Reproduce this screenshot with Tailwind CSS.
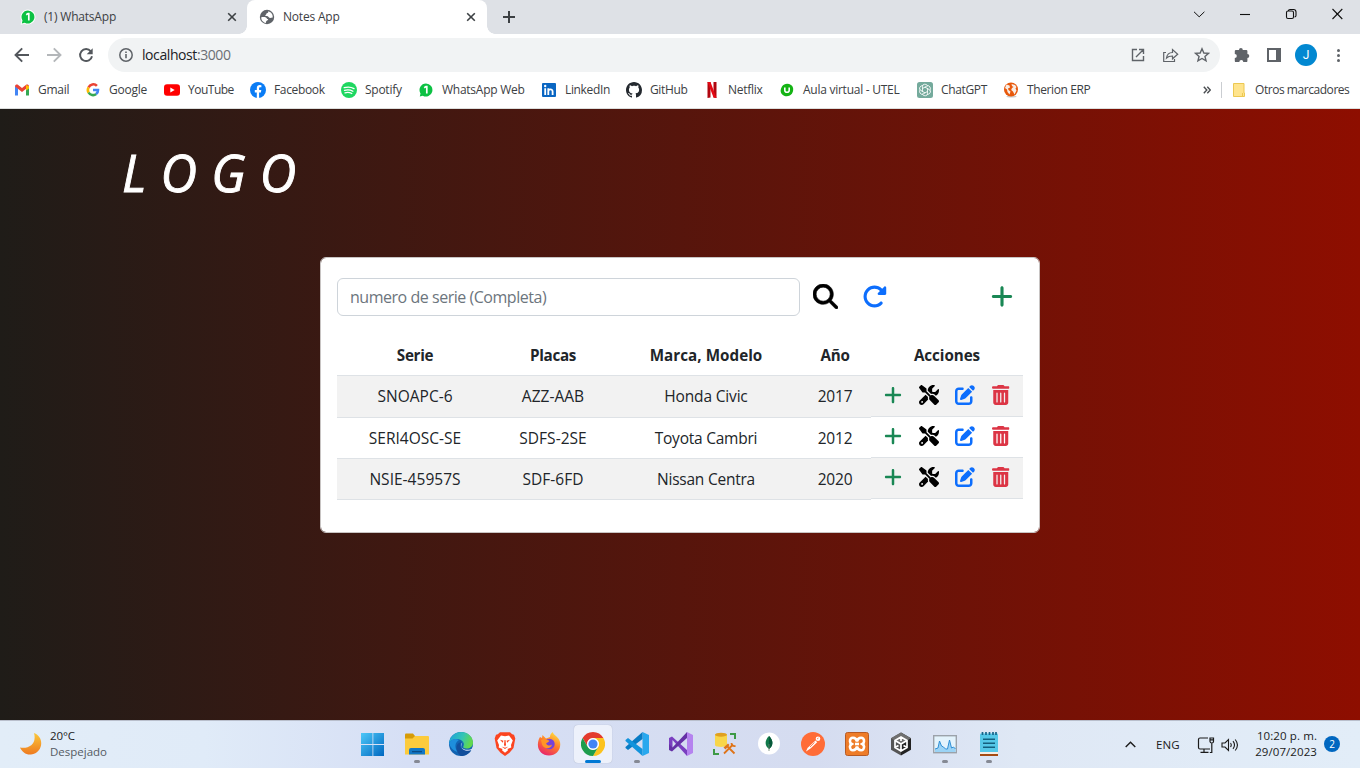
<!DOCTYPE html>
<html lang="es">
<head>
<meta charset="utf-8">
<title>Notes App</title>
<script src="https://cdn.jsdelivr.net/npm/@tailwindcss/browser@4"></script>
</head>
<body class="w-[1360px] h-[768px] overflow-hidden flex flex-col font-['Open_Sans',sans-serif] text-[#3c4043]">

<svg class="hidden">
  <symbol id="plus" viewBox="0 0 448 512"><path d="M256 80c0-17.7-14.3-32-32-32s-32 14.3-32 32V224H48c-17.7 0-32 14.3-32 32s14.3 32 32 32H192V432c0 17.7 14.3 32 32 32s32-14.3 32-32V288H400c17.7 0 32-14.3 32-32s-14.3-32-32-32H256V80z"/></symbol>
  <symbol id="tools" viewBox="0 0 512 512"><path d="M78.6 5C69.1-2.4 55.6-1.5 47 7L7 47c-8.5 8.5-9.4 22-2.1 31.6l80 104c4.5 5.9 11.6 9.4 19 9.4h54.1l109 109c-14.7 29-10 65.4 14.3 89.6l112 112c12.5 12.5 32.8 12.5 45.3 0l64-64c12.5-12.5 12.5-32.8 0-45.3l-112-112c-24.2-24.2-60.6-29-89.6-14.3l-109-109V104c0-7.5-3.5-14.5-9.4-19L78.6 5zM19.9 396.1C7.2 408.8 0 426.1 0 444.1C0 481.6 30.4 512 67.9 512c18 0 35.3-7.2 48-19.9L233.7 374.3c-7.8-20.9-9-43.6-3.6-65.1l-61.7-61.7L19.9 396.1zM512 144c0-10.5-1.1-20.7-3.2-30.5c-2.4-11.2-16.1-14.1-24.2-6l-63.9 63.9c-3 3-7.1 4.7-11.3 4.7H352c-8.8 0-16-7.2-16-16V102.6c0-4.2 1.7-8.3 4.7-11.3l63.9-63.9c8.1-8.1 5.2-21.8-6-24.2C388.7 1.1 378.5 0 368 0C288.5 0 224 64.5 224 144l0 .8 85.3 85.3c36-9.1 75.8 .5 104 28.7L429 274.5c49-23 83-72.8 83-130.5zM56 432a24 24 0 1 1 48 0 24 24 0 1 1 -48 0z"/></symbol>
  <symbol id="edit" viewBox="0 0 512 512"><path d="M471.6 21.7c-21.9-21.9-57.3-21.9-79.2 0L362.3 51.7l97.9 97.9 30.1-30.1c21.9-21.9 21.9-57.3 0-79.2L471.6 21.7zm-299.2 220c-6.1 6.1-10.8 13.6-13.5 21.9l-29.6 88.8c-2.9 8.6-.6 18.1 5.8 24.6s15.9 8.7 24.6 5.8l88.8-29.6c8.2-2.7 15.7-7.4 21.9-13.5L437.7 172.3 339.7 74.3 172.4 241.7zM96 64C43 64 0 107 0 160V416c0 53 43 96 96 96H352c53 0 96-43 96-96V320c0-17.7-14.3-32-32-32s-32 14.3-32 32v96c0 17.7-14.3 32-32 32H96c-17.7 0-32-14.3-32-32V160c0-17.7 14.3-32 32-32h96c17.7 0 32-14.3 32-32s-14.3-32-32-32H96z"/></symbol>
  <symbol id="trash" viewBox="0 0 448 512"><path d="M135.2 17.7C140.6 6.8 151.7 0 163.8 0H284.2c12.1 0 23.2 6.8 28.6 17.7L320 32h96c17.7 0 32 14.3 32 32s-14.3 32-32 32H32C14.3 96 0 81.7 0 64S14.3 32 32 32h96l7.2-14.3zM32 128H416V448c0 35.3-28.7 64-64 64H96c-35.3 0-64-28.7-64-64V128zm96 64c-8.8 0-16 7.2-16 16V432c0 8.8 7.2 16 16 16s16-7.2 16-16V208c0-8.8-7.2-16-16-16zm96 0c-8.8 0-16 7.2-16 16V432c0 8.8 7.2 16 16 16s16-7.2 16-16V208c0-8.8-7.2-16-16-16zm96 0c-8.8 0-16 7.2-16 16V432c0 8.8 7.2 16 16 16s16-7.2 16-16V208c0-8.8-7.2-16-16-16z"/></symbol>
  <symbol id="close" viewBox="0 0 10 10"><path d="M1.2 1.2l7.6 7.6M8.8 1.2L1.2 8.8" stroke="currentColor" stroke-width="1.6" fill="none"/></symbol>
</svg>

<!-- Tab strip -->
<header class="h-[34px] shrink-0 bg-[#dee1e6] flex text-[12px] leading-[34px]">
  <div class="w-[247px] flex items-center bg-[#dee1e6] pl-5">
    <svg class="w-4 h-4 shrink-0" viewBox="0 0 16 16"><path d="M8 .5a7.5 7.5 0 1 1-3.4 14.2L.6 15.7l.9-4A7.5 7.5 0 0 1 8 .5z" fill="#fff"/><path d="M8 1.5a6.5 6.5 0 1 1-3.2 12.2l-3 .7.7-3A6.5 6.5 0 0 1 8 1.5z" fill="#0cc143"/><path d="M6.2 5.8L8 4.6h.8v6.800" stroke="#fff" stroke-width="1.7" fill="none"/></svg>
    <span class="ml-2 w-[183px] tracking-[-0.2px] whitespace-nowrap">(1) WhatsApp</span>
    <svg class="w-[10px] h-[10px]"><use href="#close"/></svg>
  </div>
  <div class="w-[240px] relative flex items-center bg-white rounded-t-lg pl-3">
    <span class="absolute -left-2 bottom-0 size-2 bg-[radial-gradient(circle_at_0_0,#dee1e6_7.5px,#fff_8px)]"></span>
    <span class="absolute -right-2 bottom-0 size-2 bg-[radial-gradient(circle_at_100%_0,#dee1e6_7.5px,#fff_8px)]"></span>
    <svg class="w-4 h-4 shrink-0" viewBox="0 0 16 16"><circle cx="8" cy="8" r="7.200" fill="#5f6368"/><path d="M2.300 8.200C3.500 8 6 8 7 8.400c1 .400.800 1.600 1.800 1.700.900.100 0 1.500-1 1.600-.800.200-.600 1.200-1 2.200C4 13.300 2 11 2.300 8.200z" fill="#fff"/><path d="M9.200 2.200c.400 1-.300 1.800-1.300 2.100-.900.300-.300 1.500-1.300 1.600-.700.100-.300 1.100.500 1.100 1.200 0 2.200.200 2.700 1.300.500 1 2 .600 3.900.300.400-2.900-1.300-5.600-4.500-6.400z" fill="#fff"/></svg>
    <span class="ml-2 w-[183px] tracking-[-0.2px] whitespace-nowrap">Notes App</span>
    <svg class="w-[10px] h-[10px]"><use href="#close"/></svg>
  </div>
  <div class="flex items-center ml-4"><svg class="w-3 h-3" viewBox="0 0 12 12"><path d="M6 0v12M0 6h12" stroke="#3c4043" stroke-width="2"/></svg></div>
  <div class="ml-auto flex pt-[7px] pr-[11px]">
    <svg class="w-[161px] h-[14px]" viewBox="0 0 161 14" fill="none" stroke="#111" stroke-width="1.1"><path d="M6 4.800l5.200 5L16.400 4.800" stroke-width="1"/><path d="M52 7.500h10"/><rect x="98.500" y="4" width="7" height="7.500" rx="1.500"/><path d="M100.500 4V3.500Q100.500 2.500 102 2.500h3.500q2.500 0 2.500 2.500v3.500q0 1.500-1.500 1.500M144.500 2l9.800 10M154.300 2l-9.800 10"/></svg>
  </div>
</header>

<!-- Address bar -->
<div class="h-[42px] shrink-0 bg-white flex items-center pl-[14px]">
  <svg class="w-[82px] h-4 shrink-0" viewBox="0 0 82 16" fill="none" stroke-width="1.9"><path d="M15 8H1.800M8.200 1.300L1.500 8l6.700 6.700" stroke="#53575c"/><path d="M33 8h13.200M39.800 1.300L46.500 8l-6.700 6.700" stroke="#b4b7ba"/><path d="M76.800 4.300A6 6 0 1 0 78 9.200" stroke="#53575c"/><path d="M78.700 1.200v6h-6z" fill="#53575c"/></svg>
  <div class="ml-3 w-[1112px] h-[34px] rounded-full bg-[#f1f3f4] flex items-center pl-[11px]">
    <svg class="w-[14px] h-[14px]" viewBox="0 0 14 14"><circle cx="7" cy="7" r="6.200" fill="none" stroke="#5f6368" stroke-width="1.500"/><path d="M7 6v4.300M7 3.500v1.500" stroke="#5f6368" stroke-width="1.600"/></svg>
    <span class="ml-[9px] pb-[2px] text-[14px] tracking-[-0.42px] text-[#202124]">localhost<span class="text-[#6b6f74]">:3000</span></span>
    <svg class="ml-auto mr-[10px] w-20 h-4" viewBox="0 0 80 16" fill="none" stroke="#5f6368" stroke-width="1.400"><path d="M7 2.500H2.500v11h11V9M9 2.500h4.500V7M13.500 2.500L6 10"/><path d="M36 5.500h-2.300v9h10.800v-2.500M36.500 11c.5-3.500 2.500-5.500 6-5.500V2.500l5.200 4.700-5.200 4.600V9c-2.500 0-4.500.4-6 2z" stroke-width="1.200"/><path d="M72 1.800l1.850 4.200 4.600.4-3.500 3 1.100 4.500L72 11.500 67.950 13.900l1.100-4.500-3.500-3 4.600-.4z"/></svg>
  </div>
  <div class="ml-[14px] flex items-center">
    <svg class="w-4 h-4" viewBox="0 0 16 16" fill="#5f6368"><path d="M5 2.900a1.900 1.900 0 0 1 3.800 0h3.400a1.200 1.200 0 0 1 1.200 1.200v3a1.900 1.900 0 0 1 0 3.800v3a1.200 1.200 0 0 1-1.200 1.200H9.300a2 2 0 0 0-4 0H2a1.200 1.200 0 0 1-1.200-1.200v-2.900a2 2 0 0 0 0-4V4.100A1.200 1.200 0 0 1 2 2.900z"/></svg>
    <svg class="ml-[17px] w-[14px] h-[14px]" viewBox="0 0 14 14"><rect x="1" y="1" width="12" height="12" fill="none" stroke="#5f6368" stroke-width="2"/><rect x="9" y="0" width="5" height="14" fill="#5f6368"/></svg>
    <span class="ml-[14px] size-[22px] rounded-full bg-[#0288d1] text-white font-['Roboto',sans-serif] text-[12px] leading-[22px] text-center">J</span>
    <span class="ml-5 flex flex-col gap-[2px]"><i class="size-[3px] rounded-full bg-[#5f6368]"></i><i class="size-[3px] rounded-full bg-[#5f6368]"></i><i class="size-[3px] rounded-full bg-[#5f6368]"></i></span>
  </div>
</div>

<!-- Bookmarks -->
<nav class="h-[33px] shrink-0 bg-white border-b border-[#dcdedd] flex items-center pl-[14px] pb-1 text-[12px] tracking-[-0.26px] whitespace-nowrap [&>a]:flex [&>a]:items-center [&>a]:gap-2 [&>a]:shrink-0">
  <a class="w-[71px]"><svg class="w-4 h-4" viewBox="0 0 16 16"><path d="M1 13.500V4l3 2.200v7.300z" fill="#4285f4"/><path d="M12 13.500V6.200L15 4v9.500z" fill="#34a853"/><path d="M1 4.500C1 2.500 3 2 4.200 3L8 6l3.800-3C13 2 15 2.500 15 4.500L8 10z" fill="#ea4335"/><path d="M12 3l3 1.200v2.200l-3 2.200z" fill="#fbbc04"/></svg>Gmail</a>
  <a class="w-[79px]"><svg class="w-4 h-4" viewBox="0 0 16 16" fill="none" stroke-width="2.600"><path d="M11.900 3.900A5 5 0 0 0 3.600 5.500" stroke="#ea4335"/><path d="M3.600 5.400a5 5 0 0 0 0 5.200" stroke="#fbbc04"/><path d="M3.600 10.500a5 5 0 0 0 7.600 1.500" stroke="#34a853"/><path d="M8 8h5a5 5 0 0 1-1.900 4.100" stroke="#4285f4"/></svg>Google</a>
  <a class="w-[86px] tracking-[-0.500px]"><svg class="w-4 h-4" viewBox="0 0 16 16"><rect y="2.300" width="16" height="11.400" rx="3" fill="#f00"/><path d="M6.300 5.500v5l4.400-2.500z" fill="#fff"/></svg>YouTube</a>
  <a class="w-[91px] tracking-[-0.350px]"><svg class="w-4 h-4" viewBox="0 0 16 16"><circle cx="8" cy="8" r="8" fill="#0a7cf5"/><path d="M6.800 16v-5.600h-2V8h2V6.300c0-2.200 1.200-3.200 3-3.200l1.600.1v2h-1c-1 0-1.300.5-1.300 1.200V8h2.200l-.4 2.400H9.100V16z" fill="#fff"/></svg>Facebook</a>
  <a class="w-[77px]"><svg class="w-4 h-4" viewBox="0 0 16 16"><circle cx="8" cy="8" r="8" fill="#1ed760"/><path d="M3.200 5.700c3-.9 7-.7 9.800.9M3.500 8.300c2.800-.8 6-.5 8.400.9M4 10.800c2.300-.6 4.800-.4 6.800.7" stroke="#fff" stroke-width="1.300" fill="none" stroke-linecap="round"/></svg>Spotify</a>
  <a class="w-[123px]"><svg class="w-4 h-4" viewBox="0 0 16 16"><path d="M8 1.500a6.500 6.500 0 1 1-3.200 12.200l-3 .7.7-3A6.500 6.500 0 0 1 8 1.500z" fill="#0cc143"/><path d="M6.200 5.800L8 4.600h.8v6.800" stroke="#fff" stroke-width="1.700" fill="none"/></svg>WhatsApp Web</a>
  <a class="w-[85px] tracking-[-0.350px]"><svg class="w-4 h-4" viewBox="0 0 16 16"><rect x="1" y="1" width="14" height="14" rx="1" fill="#0a66c2"/><path d="M4.200 6.200V13M7.300 13V6.200M7.300 9.500c0-2.600 4.300-3 4.300 0V13" stroke="#fff" stroke-width="1.800" fill="none"/><circle cx="4.200" cy="4" r="1.200" fill="#fff"/></svg>LinkedIn</a>
  <a class="w-[78px] tracking-[-0.350px]"><svg class="w-4 h-4" viewBox="0 0 16 16"><path fill="#24292f" d="M8 0C3.580 0 0 3.580 0 8c0 3.540 2.290 6.530 5.470 7.590.4.070.550-.170.550-.380 0-.190-.010-.820-.010-1.490-2.010.370-2.530-.490-2.690-.940-.090-.230-.480-.940-.820-1.130-.280-.150-.680-.520-.010-.530.630-.010 1.080.580 1.230.820.720 1.210 1.870.870 2.330.660.070-.520.280-.870.510-1.070-1.780-.2-3.640-.890-3.640-3.950 0-.870.310-1.590.820-2.150-.080-.2-.360-1.020.080-2.120 0 0 .670-.210 2.200.820.640-.180 1.320-.270 2-.270s1.360.090 2 .270c1.530-1.040 2.200-.820 2.200-.820.440 1.100.160 1.920.080 2.120.510.560.820 1.270.820 2.150 0 3.070-1.870 3.750-3.650 3.950.290.250.540.730.540 1.480 0 1.070-.010 1.930-.010 2.200 0 .210.150.460.550.380A8.010 8.010 0 0 0 16 8c0-4.420-3.580-8-8-8z"/></svg>GitHub</a>
  <a class="w-[75px]"><svg class="w-4 h-4" viewBox="0 0 16 16"><path d="M3.500 0h3v15.500l-3 .5zM9.500 0h3v16l-3-.5z" fill="#b1060f"/><path d="M3.500 0h3l6 16-3-.5z" fill="#e50914"/></svg>Netflix</a>
  <a class="w-[138px]"><svg class="w-4 h-4" viewBox="0 0 16 16"><path d="M3 4.500C5 1.500 9 1 12 3s2.500 6 1 8.500S7 15.500 3.800 13 1.500 7 3 4.500z" fill="#14b314"/><path d="M5.800 5.500v2.700c0 2.700 4.400 2.700 4.400 0V5.500" stroke="#fff" stroke-width="1.600" fill="none"/></svg>Aula virtual - UTEL</a>
  <a class="w-[86px] tracking-[-0.350px]"><svg class="w-4 h-4" viewBox="0 0 16 16"><rect width="16" height="16" rx="2.500" fill="#74aa9c"/><g fill="none" stroke="#fff" stroke-width=".8"><path d="M5.500 9.500V4.500q0-2.300 2.300-2.300t3 1.900"/><path d="M5.500 9.500V4.500q0-2.300 2.300-2.300t3 1.900" transform="rotate(60 8 8)"/><path d="M5.500 9.500V4.500q0-2.300 2.300-2.300t3 1.900" transform="rotate(120 8 8)"/><path d="M5.500 9.500V4.500q0-2.300 2.300-2.300t3 1.900" transform="rotate(180 8 8)"/><path d="M5.500 9.500V4.500q0-2.300 2.300-2.300t3 1.900" transform="rotate(240 8 8)"/><path d="M5.500 9.500V4.500q0-2.300 2.300-2.300t3 1.900" transform="rotate(300 8 8)"/></g></svg>ChatGPT</a>
  <a class="tracking-[-0.400px]"><svg class="w-4 h-4" viewBox="0 0 16 16"><ellipse cx="8.500" cy="14.500" rx="5" ry="1" fill="#ccc"/><circle cx="8" cy="7.500" r="7" fill="#e8590c"/><path d="M3.500 2.500l3 1 .5 2-2 1 .5 1.500 2 1.500-1 3L4.500 10 4 7.500 2 6zM8.500 2l3.500 1 1.500 2-1 1.500 1 2-2 4-1.500-3-1.800-1.500.8-2 1.500-1-1.500-1z" fill="#f8ede6"/></svg>Therion ERP</a>
  <div class="ml-auto pr-[11px] flex items-center">
    <svg class="w-2 h-2" viewBox="0 0 8 8"><path d="M.8.800L3.800 4l-3 3.200M4.300.800L7.300 4l-3 3.200" fill="none" stroke="#4a4d51" stroke-width="1.400"/></svg>
    <span class="ml-[10px] w-px h-4 bg-[#cacdd1]"></span>
    <svg class="ml-[11px] w-3 h-[14px]" viewBox="0 0 12 14"><path d="M.5.500h10.500v9.500h.5v3.500H.5z" fill="#ffe48c" stroke="#ecc851"/><path d="M9.500 10v3" stroke="#ecc851"/></svg>
    <span class="ml-[10px] w-[94px] tracking-[-0.450px]">Otros marcadores</span>
  </div>
</nav>

<!-- Page -->
<main class="h-[611px] shrink-0 bg-linear-to-r from-[#1f1c18] to-[#8e0e00] [--tw-gradient-position:to_right]">
  <h1 class="h-[148px] pl-[122px] pt-[30px] text-[50.500px] leading-[68px] italic text-white tracking-[14.300px] [-webkit-text-stroke:0.900px_white]">LOGO</h1>
  <section class="ml-[320px] w-[720px] h-[276px] rounded-md bg-white border border-[#c8c4c3] bg-clip-padding px-4 pt-5 text-[#212529]">
    <div class="flex items-center h-[38px]">
      <div class="w-[463px] h-[38px] border border-[#ced4da] rounded-md px-3 text-[16px] leading-[37px] tracking-[-0.470px] text-[#6c757d]">numero de serie (Completa)</div>
      <svg class="ml-[13px] mb-[2px] w-[25px] h-[25px]" viewBox="0 0 512 512"><path d="M416 208c0 45.900-14.900 88.300-40 122.700L502.600 457.400c12.500 12.500 12.500 32.800 0 45.300s-32.800 12.500-45.300 0L330.700 376c-34.400 25.200-76.800 40-122.700 40C93.100 416 0 322.900 0 208S93.100 0 208 0S416 93.100 416 208zM208 352a144 144 0 1 0 0-288 144 144 0 1 0 0 288z" stroke="#000" stroke-width="12"/></svg>
      <svg class="ml-6 mb-[2px] w-[25px] h-[25px]" viewBox="0 0 512 512" fill="#0d6efd"><path d="M463.500 224H472c13.300 0 24-10.700 24-24V72c0-9.700-5.800-18.500-14.800-22.200s-19.300-1.700-26.200 5.200L413.400 96.600c-87.600-86.500-228.700-86.200-315.800 1c-87.500 87.500-87.500 229.300 0 316.800s229.300 87.500 316.800 0c12.500-12.500 12.500-32.800 0-45.300s-32.800-12.500-45.300 0c-62.500 62.500-163.800 62.500-226.300 0s-62.500-163.800 0-226.300c62.200-62.200 162.700-62.500 225.300-1L327 183c-6.900 6.900-8.900 17.200-5.200 26.200s12.500 14.800 22.200 14.800H463.500z"/></svg>
      <svg class="ml-auto mr-[10px] mb-[2px] w-[22px] h-[25px] fill-[#198754]"><use href="#plus"/></svg>
    </div>
    <div class="mt-[19px] h-[41px] border-b border-[#dee2e6] flex text-center font-bold text-[15.200px] tracking-[-0.300px] leading-[41px]">
      <span class="w-[156px]">Serie</span><span class="w-[120px]">Placas</span><span class="w-[186px] tracking-[0.050px]">Marca, Modelo</span><span class="w-[72px]">Año</span><span class="w-[152px] tracking-[-0.050px]">Acciones</span>
    </div>
    <div class="flex">
      <div class="w-[534px] text-center text-[15.500px] tracking-[0.020px] leading-[41px] [&>div]:flex [&>div]:h-[41px] [&>div]:border-b [&>div]:border-[#dee2e6]">
        <div class="bg-[#f2f2f2] !h-[42px]"><span class="w-[156px]">SNOAPC-6</span><span class="w-[120px]">AZZ-AAB</span><span class="w-[186px] tracking-[-0.170px]">Honda Civic</span><span class="w-[72px] tracking-[-0.200px]">2017</span></div>
        <div><span class="w-[156px]">SERI4OSC-SE</span><span class="w-[120px]">SDFS-2SE</span><span class="w-[186px] tracking-[-0.230px]">Toyota Cambri</span><span class="w-[72px] tracking-[-0.200px]">2012</span></div>
        <div class="bg-[#f2f2f2]"><span class="w-[156px]">NSIE-45957S</span><span class="w-[120px]">SDF-6FD</span><span class="w-[186px] tracking-[-0.230px]">Nissan Centra</span><span class="w-[72px] tracking-[-0.200px]">2020</span></div>
      </div>
      <div class="w-[152px] [&>div]:flex [&>div]:h-[41px] [&>div]:border-b [&>div]:border-[#dee2e6] [&>div]:pt-[8.500px] [&>div]:pl-[13px] [&_svg]:h-5 [&_svg]:shrink-0">
        <div class="bg-[#f2f2f2]"><svg class="w-[18px] fill-[#198754]"><use href="#plus"/></svg><svg class="ml-[17px] w-5"><use href="#tools"/></svg><svg class="ml-4 w-5 fill-[#0d6efd]"><use href="#edit"/></svg><svg class="ml-[17px] w-[17.500px] fill-[#dc3545]"><use href="#trash"/></svg></div>
        <div><svg class="w-[18px] fill-[#198754]"><use href="#plus"/></svg><svg class="ml-[17px] w-5"><use href="#tools"/></svg><svg class="ml-4 w-5 fill-[#0d6efd]"><use href="#edit"/></svg><svg class="ml-[17px] w-[17.500px] fill-[#dc3545]"><use href="#trash"/></svg></div>
        <div class="bg-[#f2f2f2]"><svg class="w-[18px] fill-[#198754]"><use href="#plus"/></svg><svg class="ml-[17px] w-5"><use href="#tools"/></svg><svg class="ml-4 w-5 fill-[#0d6efd]"><use href="#edit"/></svg><svg class="ml-[17px] w-[17.500px] fill-[#dc3545]"><use href="#trash"/></svg></div>
      </div>
    </div>
  </section>
</main>

<!-- Taskbar -->
<footer class="h-12 shrink-0 border-t border-[#b9bfcc] bg-[linear-gradient(90deg,#e2edf8_0%,#e0ebf8_15%,#d6dff5_30%,#d5dcf0_60%,#dfe8f5_75%,#e2edf8_100%)] flex items-center text-[#1b1b1b]">
  <div class="w-[351px] flex items-center pl-[19px] pb-[1px]">
    <svg class="w-6 h-6" viewBox="0 0 24 24"><defs><linearGradient id="mo" x1="0" y1="0" x2="0" y2="1"><stop stop-color="#fbc83a"/><stop offset="1" stop-color="#ee7a20"/></linearGradient></defs><path d="M15 1c11 4 9 20-3 21.500C7 23 3 20 1 15.500 10 17 18 12 15 1z" fill="url(#mo)"/></svg>
    <div class="ml-[7px] pb-[1px] text-[11.500px] leading-4"><div class="tracking-[-0.100px]">20°C</div><div class="text-[#555b63]">Despejado</div></div>
  </div>
  <div class="flex h-[47px] [&>div]:w-11 [&>div]:h-[47px] [&>div]:flex [&>div]:flex-col [&>div]:items-center [&>div]:pt-[11px] [&_svg]:size-6 [&_svg]:shrink-0 [&_i]:mt-1 [&_i]:h-[3px] [&_i]:w-[6px] [&_i]:rounded-full [&_i]:bg-[#858994]">
    <div><svg viewBox="0 0 24 24"><defs><linearGradient id="w" x2="1" y2="1"><stop stop-color="#4cc8f8"/><stop offset="1" stop-color="#0067c0"/></linearGradient></defs><path d="M0 1H11.500v11H0zM12.300 1H23v11H12.300zM0 13H11.500v11H0zM12.300 13H23v11H12.300z" fill="url(#w)"/></svg></div>
    <div><svg viewBox="0 0 24 24"><path d="M0 2.500Q0 1.500 1 1.500h7l2 2.500v5H0z" fill="#d69b08"/><path d="M10 4h13q1 0 1 1v17.500H0V6.500h7.500z" fill="#fccb3c"/><path d="M4 22.500V18q0-2 2-2h12q2 0 2 2v4.500z" fill="#1277c5"/><path d="M7 19h10v1.300H7z" fill="#0a4c85"/></svg><i></i></div>
    <div><svg viewBox="0 0 24 24"><defs><linearGradient id="e1" x2="1" y2=".3"><stop stop-color="#1c9ddd"/><stop offset=".6" stop-color="#34c5b5"/><stop offset="1" stop-color="#62d84e"/></linearGradient></defs><circle cx="12" cy="12" r="12" fill="#1263b1"/><path d="M0 11C1 4 6 0 12 0c7 0 12 5 12 10.500 0 4-3 6-6.500 6-3 0-4-1-3-2.500C16 11 13 7 8 7c-4 0-7 2-8 4z" fill="url(#e1)"/><path d="M0 11c2-4 7-5 10-3-4 2-5 8-1 12-5-1-8-5-9-9z" fill="#1e8fdc"/><path d="M12 10c-3 5 1 10 11 7-2.500 4.500-7 7-11 7-5-3-7-12 0-14z" fill="#124e9b"/><path d="M13.500 10.500c-3 2-1.500 6.500 3 7.200 3 .5 5.500-.5 6.500-1.200l.8-1.500 1 3-2 3.500c-1-1-1-2.500 0-3.500-5 2-10.500 0-10.500-4 0-1.500.5-2.700 1.200-3.500z" fill="#d7e0f5"/></svg></div>
    <div><svg viewBox="0 0 24 24"><path d="M7 .3h10l2.200 2 1.800.5 1.300 3.700L20.500 16l-4 4.700L12 24l-4.500-3.300-4-4.700L1.700 6.500 3 2.800l1.800-.5z" fill="#fb4420"/><path d="M8 3.500l4 .8 4-.8 3.800 5-1.800 4.500 .3 2.500-3.800 1.500 .5 1.200L12 20.800 9 18.200l.5-1.200-3.800-1.500 .3-2.500L4.200 8.500z" fill="#fff"/><path d="M7 7.800l3.500 1-.8 2zM17 7.800l-3.500 1 .8 2zM11.500 8h1l.5 5-1 1.500-1-1.500zM8.500 14.500L12 17l3.500-2.500-3.500 1.300z" fill="#fb4420"/></svg></div>
    <div><svg viewBox="0 0 24 24"><defs><linearGradient id="ff" x1=".8" x2=".3" y2="1"><stop stop-color="#ffe340"/><stop offset=".5" stop-color="#ff7a2a"/><stop offset="1" stop-color="#e8226c"/></linearGradient></defs><path d="M3 5l2 1 .5-3L9 6.500 13 5c0-2 1-3.500 2.500-5 1 3 6.500 5 7.500 10 1.500 8-4 13.500-11 13.500S0 18 1 11c.2-2 1-4.500 2-6z" fill="url(#ff)"/><circle cx="12.500" cy="12" r="5.200" fill="#7542d8"/><path d="M4 8c3-1.500 5 0 8 .5 1 1-2 2-3 3 1 2 4 3 6 1-1 5-8 5-10 0z" fill="#ff9526"/></svg></div>
    <div class="relative"><span class="absolute left-[3px] top-1 w-[38px] h-[38px] rounded bg-[#edf1fb] shadow-[0_0_1px_#9aa3b8]"></span><svg class="relative" viewBox="0 0 24 24"><path d="M12 0a12 12 0 0 1 10.400 6H12a6 6 0 0 0-5.200 9L1.600 6A12 12 0 0 1 12 0z" fill="#e33b2e"/><path d="M22.400 6A12 12 0 0 1 12 24l5.200-9A6 6 0 0 0 12 6z" fill="#fcc31e"/><path d="M1.600 6l5.200 9a6 6 0 0 0 10.400 0L12 24A12 12 0 0 1 1.600 6z" fill="#1f9d4d"/><circle cx="12" cy="12" r="5.800" fill="#fff"/><circle cx="12" cy="12" r="4.600" fill="#4285f4"/></svg><i class="relative !w-4 !bg-[#0078d4]"></i></div>
    <div><svg viewBox="0 0 24 24"><path d="M17.500 0L24 3v18l-6.500 3z" fill="#28a8ee"/><path d="M17.500 0v7L3 18l-2.500-2v-1z" fill="#087bc4"/><path d="M17.500 24v-7L3 6 .5 8v1z" fill="#1293dc"/></svg><i></i></div>
    <div><svg viewBox="0 0 24 24"><path d="M0 6l3-1.500L18 18v6L3.500 8v9L0 18z" fill="#7a3fc0"/><path d="M0 18l3 1.500L18 6V0L3.500 15.500 0 12z" fill="#6531a6"/><path d="M18 0l6 3v18l-6 3z" fill="#b583ef"/></svg></div>
    <div><svg viewBox="0 0 24 24"><path d="M2 2.500v10.500c0 2.500 12 2.500 12 0V2.500z" fill="#f8d64a"/><ellipse cx="8" cy="2.700" rx="6" ry="2" fill="#e0a020"/><path d="M17 2h5v5M1 17v5h5" fill="none" stroke="#3d9a46" stroke-width="2"/><path d="M11 21.500l9-9M14 14l7.500 7.500" stroke="#df7419" stroke-width="1.800"/><path d="M10.500 15.500l4.500-4 1.500 1.500-4 4.500z" fill="#df7419"/><path d="M18.500 11q0 3.500 4 3" fill="none" stroke="#df7419" stroke-width="1.800"/></svg></div>
    <div><svg viewBox="0 0 24 24"><circle cx="12" cy="11.500" r="11" fill="#fff"/><path d="M12 4c5 5 4 10 0 13-4-3-5-8 0-13z" fill="#117a4a"/><path d="M12 4c5 5 4 10 0 13z" fill="#07593a"/><path d="M12 12v7" stroke="#69806c" stroke-width=".8"/></svg></div>
    <div><svg viewBox="0 0 24 24"><circle cx="12" cy="12" r="12" fill="#ff6c37"/><circle cx="17" cy="6.800" r="2.300" fill="#fff"/><path d="M14.500 8.500l1.700 1.700-6.700 6.300L5 19.500l1.500-3.500z" fill="#fff"/><path d="M13.500 10.500l-4.500 4.500M16 7l1.500-1" stroke="#ff6c37" stroke-width=".8"/></svg></div>
    <div><svg viewBox="0 0 24 24"><rect x=".5" y=".5" width="23" height="23" rx="2" fill="#ee7c28" stroke="#b75a24"/><path d="M12 9.500c1-5 7.500-5 7 0 0 1.300-.8 2-1.700 2.500.9.500 1.700 1.200 1.700 2.500.5 5-6 5-7 0-1 5-7.500 5-7 0 0-1.300.8-2 1.700-2.500C5.800 11.500 5 10.800 5 9.500c-.5-5 6-5 7 0z" fill="none" stroke="#fff" stroke-width="2.600"/><path d="M10 12h4" stroke="#fff" stroke-width="2.600"/></svg></div>
    <div><svg viewBox="0 0 24 24"><path d="M12 .5l10 5.700v11.600l-10 5.700z" fill="#222"/><path d="M12 .5L2 6.200v11.600l10 5.700z" fill="#555"/><path d="M12 .5l10 5.700-10 5.800L2 6.200z" fill="#707070"/><path d="M12 5l6 3.500v7L12 19l-6-3.500v-7zM6 8.500l6 3.500 6-3.500M12 12v7M12 5v4M6 15.500l3.500-2M18 15.500l-3.500-2" fill="none" stroke="#fff" stroke-width="1.700"/></svg></div>
    <div><svg viewBox="0 0 24 24"><rect x=".7" y="3.700" width="22.600" height="17" fill="#e3f3fc" stroke="#9ca2aa" stroke-width="1.400"/><path d="M2 17l3-1 1.500-7 2 5 2 1 2 2 2 0 2-9 2 8 2-1 2 2v3H2z" fill="#9bd3f5"/><path d="M2 17l3-1 1.500-7 2 5 2 1 2 2 2 0 2-9 2 8 2-1 2 2" fill="none" stroke="#2e8fd6" stroke-width="1"/></svg><i></i></div>
    <div><svg viewBox="0 0 24 24"><path d="M3 20h18v4H3z" fill="#a54b12"/><rect x="3" y="1.500" width="18" height="19.500" rx="1" fill="#55c8e8"/><path d="M3 20h18v2H3z" fill="#f4eee5"/><path d="M5.500 0v3M9 0v3M12.500 0v3M16 0v3M19 0v3" stroke="#17658a" stroke-width="1.700"/><path d="M6 7.200h12M6 11.200h12M6 15.200h12" stroke="#14607f" stroke-width="1.500"/></svg><i></i></div>
  </div>
  <div class="ml-auto flex items-center pr-5">
    <svg class="w-[11px] h-[7px]" viewBox="0 0 11 7"><path d="M.7 6L5.500 1.200 10.300 6" fill="none" stroke="#1b1b1b" stroke-width="1.400"/></svg>
    <span class="ml-5 text-[11.500px] tracking-[0.050px] w-[24px]">ENG</span>
    <svg class="ml-[17px] w-[42px] h-4" viewBox="0 0 42 16" fill="none" stroke="#1b1b1b" stroke-width="1.200"><path d="M11 1H3Q1.500 1 1.500 2.500v8Q1.500 12 3 12h10M7 12v3.500M3.500 15.400h8M13 1h3.500v3.500q0 1.500-1.700 1.500T13 4.500zM13 2.800h3.500M14.800 6v9.500h-2"/><path d="M25 6h3l3.500-3.500v11L28 10h-3zM33.500 6q1.500 2 0 4M36 4.200q3 3.800 0 7.600M38.200 2.500q4.500 5.500 0 11" stroke-width="1.100"/></svg>
    <div class="ml-[14px] pb-[2px] w-[64px] text-right text-[11.500px] leading-4 whitespace-nowrap"><div class="tracking-[0.100px]">10:20 p. m.</div><div class="tracking-[0.080px]">29/07/2023</div></div>
    <span class="ml-[7px] mb-[2px] size-4 rounded-full bg-[#0067c0] text-white text-[10px] leading-4 text-center">2</span>
  </div>
</footer>
</body>
</html>
